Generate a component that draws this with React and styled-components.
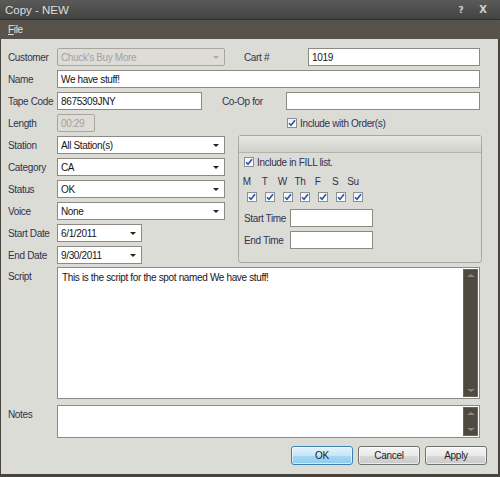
import React from "react";
import styled, { createGlobalStyle } from "styled-components";

const Global = createGlobalStyle`
  html, body { margin: 0; padding: 0; background: #47443e; }
  body { font-family: "Liberation Sans", Arial, sans-serif; }
  * { box-sizing: border-box; }
`;

const Window = styled.div`
  width: 500px;
  height: 477px;
  display: flex;
  flex-direction: column;
  background: #47443e;
  padding: 0 2px 3px 1px;
  font-size: 10px;
  letter-spacing: -0.35px;
`;

const TitleBar = styled.div`
  height: 20px;
  margin: 0 -2px 0 -1px;
  display: flex;
  align-items: center;
  padding: 0 6px 0 5px;
  background: linear-gradient(#5a5a5a, #434341);
  border-bottom: 1px solid #2f2f2d;
  color: #dedede;
  font-size: 11.5px;
  letter-spacing: 0;
`;

const Title = styled.span`
  flex: 1;
`;

const TitleButton = styled.span`
  width: 22px;
  text-align: center;
  color: #d0d0d0;
  font-weight: bold;
  font-size: ${(p) => p.$size || 10}px;
  font-family: "DejaVu Sans", sans-serif;
`;

const MenuBar = styled.div`
  height: 19px;
  margin: 0 -2px 0 -1px;
  display: flex;
  align-items: center;
  padding-left: 8px;
  background: #57524a;
  color: #e6e4dc;
`;

const MenuItem = styled.span`
  & u { text-decoration: underline; }
`;

const Content = styled.div`
  flex: 1;
  background: #dcdcd6;
  padding: 9px 11px 0 7px;
  display: flex;
  flex-direction: column;
`;

const Row = styled.div`
  display: flex;
  align-items: center;
  height: 18px;
  margin-right: ${(p) => p.$mr ?? 7}px;
  margin-top: ${(p) => p.$mt ?? 0}px;
`;

const Label = styled.span`
  width: ${(p) => p.$w || 49}px;
  margin-left: ${(p) => p.$ml || 0}px;
  flex-shrink: 0;
  color: #32324f;
  white-space: nowrap;
`;

const Field = styled.div`
  height: 18px;
  width: ${(p) => (p.$w ? p.$w + "px" : "auto")};
  flex: ${(p) => (p.$w ? "none" : 1)};
  display: flex;
  align-items: center;
  padding: 0 0 0 3px;
  background: ${(p) => (p.$disabled ? "#dedcd6" : "#fff")};
  border: 1px solid ${(p) => (p.$disabled ? "#a8a69e" : "#8c8a82")};
  border-radius: ${(p) => (p.$disabled ? 2 : 0)}px;
  color: ${(p) => (p.$disabled ? "#a2a2a2" : "#161616")};
  white-space: nowrap;
  overflow: hidden;
`;

const FieldText = styled.span`
  flex: 1;
`;

const Arrow = styled.span`
  width: 0;
  height: 0;
  margin-right: 5px;
  border-left: 3px solid transparent;
  border-right: 3px solid transparent;
  border-top: 3px solid ${(p) => (p.$disabled ? "#aaa" : "#222")};
`;

const Lower = styled.div`
  display: flex;
  gap: 13px;
  margin-top: 4px;
  margin-right: 5px;
`;

const LeftCol = styled.div`
  width: 217px;
  display: flex;
  flex-direction: column;
  gap: 4px;
`;

const RightCol = styled.div`
  flex: 1;
  display: flex;
  flex-direction: column;
`;

const CheckRow = styled.label`
  display: flex;
  align-items: center;
  gap: 3px;
  height: ${(p) => p.$h || 10}px;
  padding-left: ${(p) => p.$pl || 0}px;
  color: #32324f;
`;

const Box = styled.span`
  width: 10px;
  height: 10px;
  flex-shrink: 0;
  display: inline-flex;
  align-items: center;
  justify-content: center;
  background: linear-gradient(#f4f4f4, #ffffff);
  border: 1px solid #8e8e8e;
`;

const Check = () => (
  <Box>
    <svg width="8" height="8" viewBox="0 0 8 8">
      <path d="M1 4.2 L3 6.3 L7 1.2" fill="none" stroke="#2459a8" strokeWidth="1.6" />
    </svg>
  </Box>
);

const Group = styled.div`
  margin-top: 3px;
  height: 128px;
  border: 1px solid #aaa8a0;
  border-radius: 3px;
  overflow: hidden;
  display: flex;
  flex-direction: column;
`;

const GroupHeader = styled.div`
  height: 17px;
  background: linear-gradient(#e8e8e4, #d0d0ca);
  border-bottom: 1px solid #b4b2aa;
`;

const GroupBody = styled.div`
  padding: 4px 0 0 5px;
  display: flex;
  flex-direction: column;
`;

const Days = styled.div`
  display: grid;
  grid-template-columns: repeat(7, 17.7px);
  margin-left: -4px;
  margin-top: ${(p) => p.$mt}px;
  align-items: center;
  height: 10px;
`;

const DayLabel = styled.span`
  text-align: center;
  padding-right: 4px;
  color: #32324f;
`;

const DayCheck = styled.span`
  display: flex;
  justify-content: center;
  padding-left: 7px;
`;

const TimeRow = styled.div`
  display: flex;
  align-items: center;
  height: 18px;
  margin-top: ${(p) => p.$mt}px;
`;

const TextArea = styled.div`
  flex: 1;
  height: ${(p) => p.$h}px;
  display: flex;
  background: #fff;
  border: 1px solid #8c8a82;
  padding: 1px;
`;

const AreaText = styled.div`
  flex: 1;
  padding: 3px 0 0 3px;
  color: #161626;
`;

const Scroll = styled.div`
  width: 15px;
  background: #4f4a40;
  border: 1px solid #6a655b;
  display: flex;
  flex-direction: column;
  justify-content: space-between;
  align-items: center;
  padding: 4px 0;
`;

const ScrollArrow = styled.span`
  width: 0;
  height: 0;
  border-left: 4px solid transparent;
  border-right: 4px solid transparent;
  ${(p) => (p.$down ? "border-top" : "border-bottom")}: 3px solid #8d877b;
`;

const AreaRow = styled.div`
  display: flex;
  align-items: flex-start;
  margin-right: 7px;
  margin-top: ${(p) => p.$mt}px;
`;

const AreaLabel = styled(Label)`
  padding-top: 4px;
`;

const ButtonBar = styled.div`
  display: flex;
  justify-content: flex-end;
  gap: 5px;
  margin-top: 8px;
`;

const Button = styled.button`
  width: 62px;
  height: 19px;
  padding: 0;
  font-family: inherit;
  font-size: 10px;
  letter-spacing: -0.3px;
  color: #222;
  border-radius: 3px;
  border: 1px solid ${(p) => (p.$primary ? "#3c7fb1" : "#707070")};
  background: ${(p) =>
    p.$primary
      ? "linear-gradient(#e3f3fc 0%, #c6e6f7 50%, #a6d8f2 51%, #8ecbee 100%)"
      : "linear-gradient(#f4f4f4 0%, #e9e9e9 50%, #d9d9d9 51%, #c9c9c9 100%)"};
  box-shadow: inset 0 0 0 1px rgba(255, 255, 255, 0.6);
`;

const Select = ({ w, disabled, children }) => (
  <Field $w={w} $disabled={disabled}>
    <FieldText>{children}</FieldText>
    <Arrow $disabled={disabled} />
  </Field>
);

export default function App() {
  const days = ["M", "T", "W", "Th", "F", "S", "Su"];
  return (
    <>
      <Global />
      <Window>
        <TitleBar>
          <Title>Copy - NEW</Title>
          <TitleButton $size={9}>?</TitleButton>
          <TitleButton>X</TitleButton>
        </TitleBar>
        <MenuBar>
          <MenuItem>
            <u>F</u>ile
          </MenuItem>
        </MenuBar>
        <Content>
          <Row>
            <Label>Customer</Label>
            <Select w={168} disabled>
              Chuck's Buy More
            </Select>
            <Label $ml={19} $w={64}>
              Cart #
            </Label>
            <Field>1019</Field>
          </Row>
          <Row $mt={4}>
            <Label>Name</Label>
            <Field>We have stuff!</Field>
          </Row>
          <Row $mt={4}>
            <Label>Tape Code</Label>
            <Field $w={145}>8675309JNY</Field>
            <Label $ml={20} $w={64}>
              Co-Op for
            </Label>
            <Field />
          </Row>
          <Lower>
            <LeftCol>
              <Row $mr={0}>
                <Label>Length</Label>
                <Field $w={38} $disabled>
                  00:29
                </Field>
              </Row>
              <Row $mr={0}>
                <Label>Station</Label>
                <Select>All Station(s)</Select>
              </Row>
              <Row $mr={0}>
                <Label>Category</Label>
                <Select>CA</Select>
              </Row>
              <Row $mr={0}>
                <Label>Status</Label>
                <Select>OK</Select>
              </Row>
              <Row $mr={0}>
                <Label>Voice</Label>
                <Select>None</Select>
              </Row>
              <Row $mr={0}>
                <Label>Start Date</Label>
                <Select w={85}>6/1/2011</Select>
              </Row>
              <Row $mr={0}>
                <Label>End Date</Label>
                <Select w={85}>9/30/2011</Select>
              </Row>
            </LeftCol>
            <RightCol>
              <CheckRow $h={18} $pl={49}>
                <Check />
                Include with Order(s)
              </CheckRow>
              <Group>
                <GroupHeader />
                <GroupBody>
                  <CheckRow>
                    <Check />
                    Include in FILL list.
                  </CheckRow>
                  <Days $mt={9}>
                    {days.map((d) => (
                      <DayLabel key={d}>{d}</DayLabel>
                    ))}
                  </Days>
                  <Days $mt={6}>
                    {days.map((d) => (
                      <DayCheck key={d}>
                        <Check />
                      </DayCheck>
                    ))}
                  </Days>
                  <TimeRow $mt={7}>
                    <Label $w={46}>Start Time</Label>
                    <Field $w={83} />
                  </TimeRow>
                  <TimeRow $mt={4}>
                    <Label $w={46}>End Time</Label>
                    <Field $w={83} />
                  </TimeRow>
                </GroupBody>
              </Group>
            </RightCol>
          </Lower>
          <AreaRow $mt={3}>
            <AreaLabel>Script</AreaLabel>
            <TextArea $h={132}>
              <AreaText>This is the script for the spot named We have stuff!</AreaText>
              <Scroll>
                <ScrollArrow />
                <ScrollArrow $down />
              </Scroll>
            </TextArea>
          </AreaRow>
          <AreaRow $mt={6}>
            <AreaLabel>Notes</AreaLabel>
            <TextArea $h={33}>
              <AreaText />
              <Scroll>
                <ScrollArrow />
                <ScrollArrow $down />
              </Scroll>
            </TextArea>
          </AreaRow>
          <ButtonBar>
            <Button $primary>OK</Button>
            <Button>Cancel</Button>
            <Button>Apply</Button>
          </ButtonBar>
        </Content>
      </Window>
    </>
  );
}
